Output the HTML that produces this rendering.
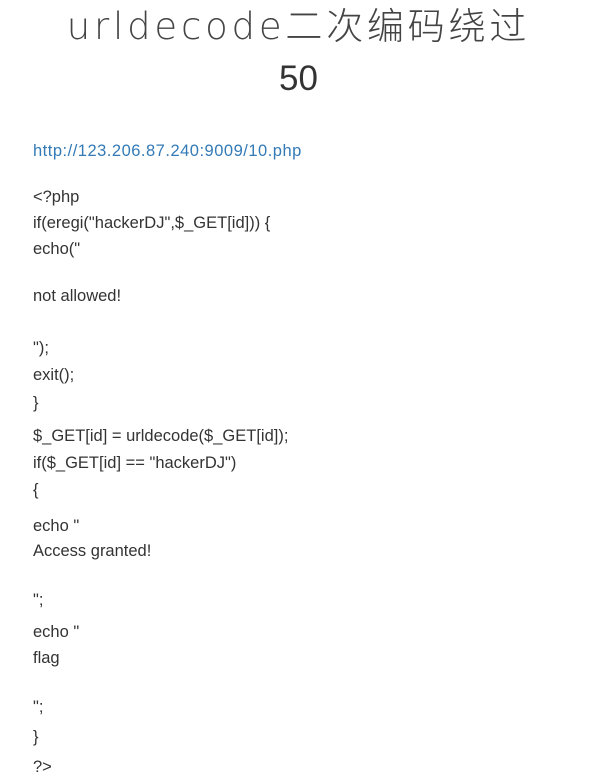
<!DOCTYPE html>
<html><head><meta charset="utf-8"><style>
body{margin:0;width:597px;height:784px;background:#fff;position:relative;overflow:hidden;font-family:"Liberation Sans","Noto Sans CJK SC",sans-serif;color:#333}
.l{position:absolute;left:33px;font-size:16.5px;line-height:20px;white-space:pre;letter-spacing:0px}
.t{position:absolute;left:0;width:597px;text-align:center;color:#333}
</style></head><body>
<div class="t" style="top:4px;font-size:37px;line-height:46px;letter-spacing:3.8px;color:#444;font-family:'DejaVu Sans','Noto Sans CJK SC',sans-serif;font-weight:200">urldecode二次编码绕过</div>
<div class="t" style="top:58px;font-size:35px;line-height:42px">50</div>
<div class="l" style="top:141px;color:#337ab7;letter-spacing:0.5px">http://123.206.87.240:9009/10.php</div>
<div class="l" style="top:187px">&lt;?php</div>
<div class="l" style="top:213px">if(eregi("hackerDJ",$_GET[id])) {</div>
<div class="l" style="top:239px">echo("</div>
<div class="l" style="top:286px">not allowed!</div>
<div class="l" style="top:338px">");</div>
<div class="l" style="top:365px">exit();</div>
<div class="l" style="top:393px">}</div>
<div class="l" style="top:426px">$_GET[id] = urldecode($_GET[id]);</div>
<div class="l" style="top:453px">if($_GET[id] == "hackerDJ")</div>
<div class="l" style="top:480px">{</div>
<div class="l" style="top:516px">echo "</div>
<div class="l" style="top:541px">Access granted!</div>
<div class="l" style="top:590px">";</div>
<div class="l" style="top:622px">echo "</div>
<div class="l" style="top:648px">flag</div>
<div class="l" style="top:697px">";</div>
<div class="l" style="top:727px">}</div>
<div class="l" style="top:757px">?&gt;</div>
</body></html>
